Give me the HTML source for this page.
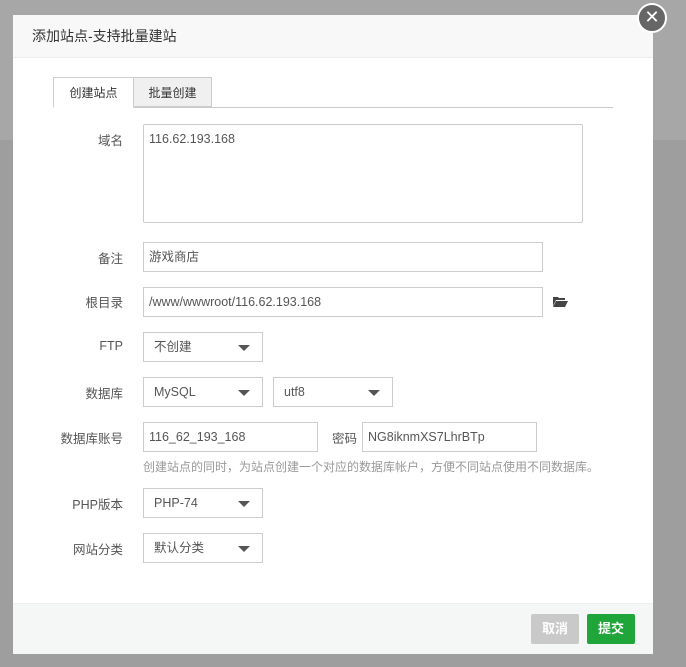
<!DOCTYPE html><html><head><meta charset="utf-8"><style>
body{margin:0;width:686px;height:667px;background:#9e9e9e;position:relative;overflow:hidden;font-family:"Liberation Sans","Noto Sans CJK SC",sans-serif;font-size:12px;color:#555}
.bgtop{position:absolute;left:0;top:0;width:686px;height:140px;background:#a7a7a7}
.m{position:absolute;left:13px;top:15px;width:640px;height:638px;background:#fff}
.hd{height:42px;border-bottom:1px solid #eee;background:#f8f8f8;font-size:14px;color:#333;line-height:42px;padding-left:19px}
.x{position:absolute;left:637px;top:3px;width:26px;height:26px;border-radius:50%;background:#666;border:2px solid #fff;color:#fff;text-align:center;line-height:25px;font-size:18px}
.tabs{position:absolute;left:40px;top:62px;width:560px;height:30px;border-bottom:1px solid #ccc}
.tab{position:absolute;top:0;height:31px;line-height:30px;text-align:center;box-sizing:border-box;font-size:12px;color:#333}
.l{position:absolute;width:110px;text-align:right;left:0;color:#555;font-size:12.5px;margin-top:-3px}
.i{position:absolute;border:1px solid #ccc;box-sizing:border-box;height:30px;line-height:28px;padding-left:5px;color:#555;background:#fff;font-size:12.5px}
.s:after{content:"";position:absolute;right:12px;top:12px;border:6px solid transparent;border-top:6px solid #555;border-bottom:0}
.s{padding-left:10px}
.ft{position:absolute;left:0;top:588px;width:640px;height:50px;background:#f5f6f6;border-top:1px solid #eee}
.b{position:absolute;top:10px;width:48px;height:30px;border-radius:2px;color:#fff;font-weight:bold;text-align:center;line-height:30px;font-size:13px}
</style></head><body>
<div class="bgtop"></div>
<div class="m">
<div class="hd">添加站点-支持批量建站</div>
<div class="tabs">
<div class="tab" style="left:0;width:81px;border:1px solid #ccc;border-bottom:1px solid #fff;background:#fff">创建站点</div>
<div class="tab" style="left:80px;width:79px;height:30px;border:1px solid #ccc;background:#f0f0f0">批量创建</div>
</div>
<div class="l" style="top:118px">域名</div>
<div class="i" style="left:130px;top:109px;width:440px;height:99px;line-height:normal;padding-top:7px;border-radius:2px">116.62.193.168</div>
<div class="l" style="top:236px">备注</div>
<div class="i" style="left:130px;top:227px;width:400px">游戏商店</div>
<div class="l" style="top:280px">根目录</div>
<div class="i" style="left:130px;top:272px;width:400px">/www/wwwroot/116.62.193.168</div>
<svg style="position:absolute;left:540px;top:281px" width="15" height="11" viewBox="0 0 15 11"><path d="M0 1h5l1 1h6v2H3L0 10z" fill="#444"/><path d="M3 5h12l-3 6H0z" fill="#444"/></svg>
<div class="l" style="top:327px">FTP</div>
<div class="i s" style="left:130px;top:317px;width:120px">不创建</div>
<div class="l" style="top:371px">数据库</div>
<div class="i s" style="left:130px;top:362px;width:120px">MySQL</div>
<div class="i s" style="left:260px;top:362px;width:120px">utf8</div>
<div class="l" style="top:416px">数据库账号</div>
<div class="i" style="left:130px;top:407px;width:175px">116_62_193_168</div>
<div style="position:absolute;left:319px;top:413px;color:#555;font-size:12.5px">密码</div>
<div class="i" style="left:349px;top:407px;width:175px">NG8iknmXS7LhrBTp</div>
<div style="position:absolute;left:130px;top:443px;color:#999;font-size:12px">创建站点的同时，为站点创建一个对应的数据库帐户，方便不同站点使用不同数据库。</div>
<div class="l" style="top:482px">PHP版本</div>
<div class="i s" style="left:130px;top:473px;width:120px">PHP-74</div>
<div class="l" style="top:527px">网站分类</div>
<div class="i s" style="left:130px;top:518px;width:120px">默认分类</div>
<div class="ft">
<div class="b" style="left:518px;background:#c9c9c9">取消</div>
<div class="b" style="left:574px;background:#20a53a">提交</div>
</div>
</div>
<div class="x">✕</div>
</body></html>
